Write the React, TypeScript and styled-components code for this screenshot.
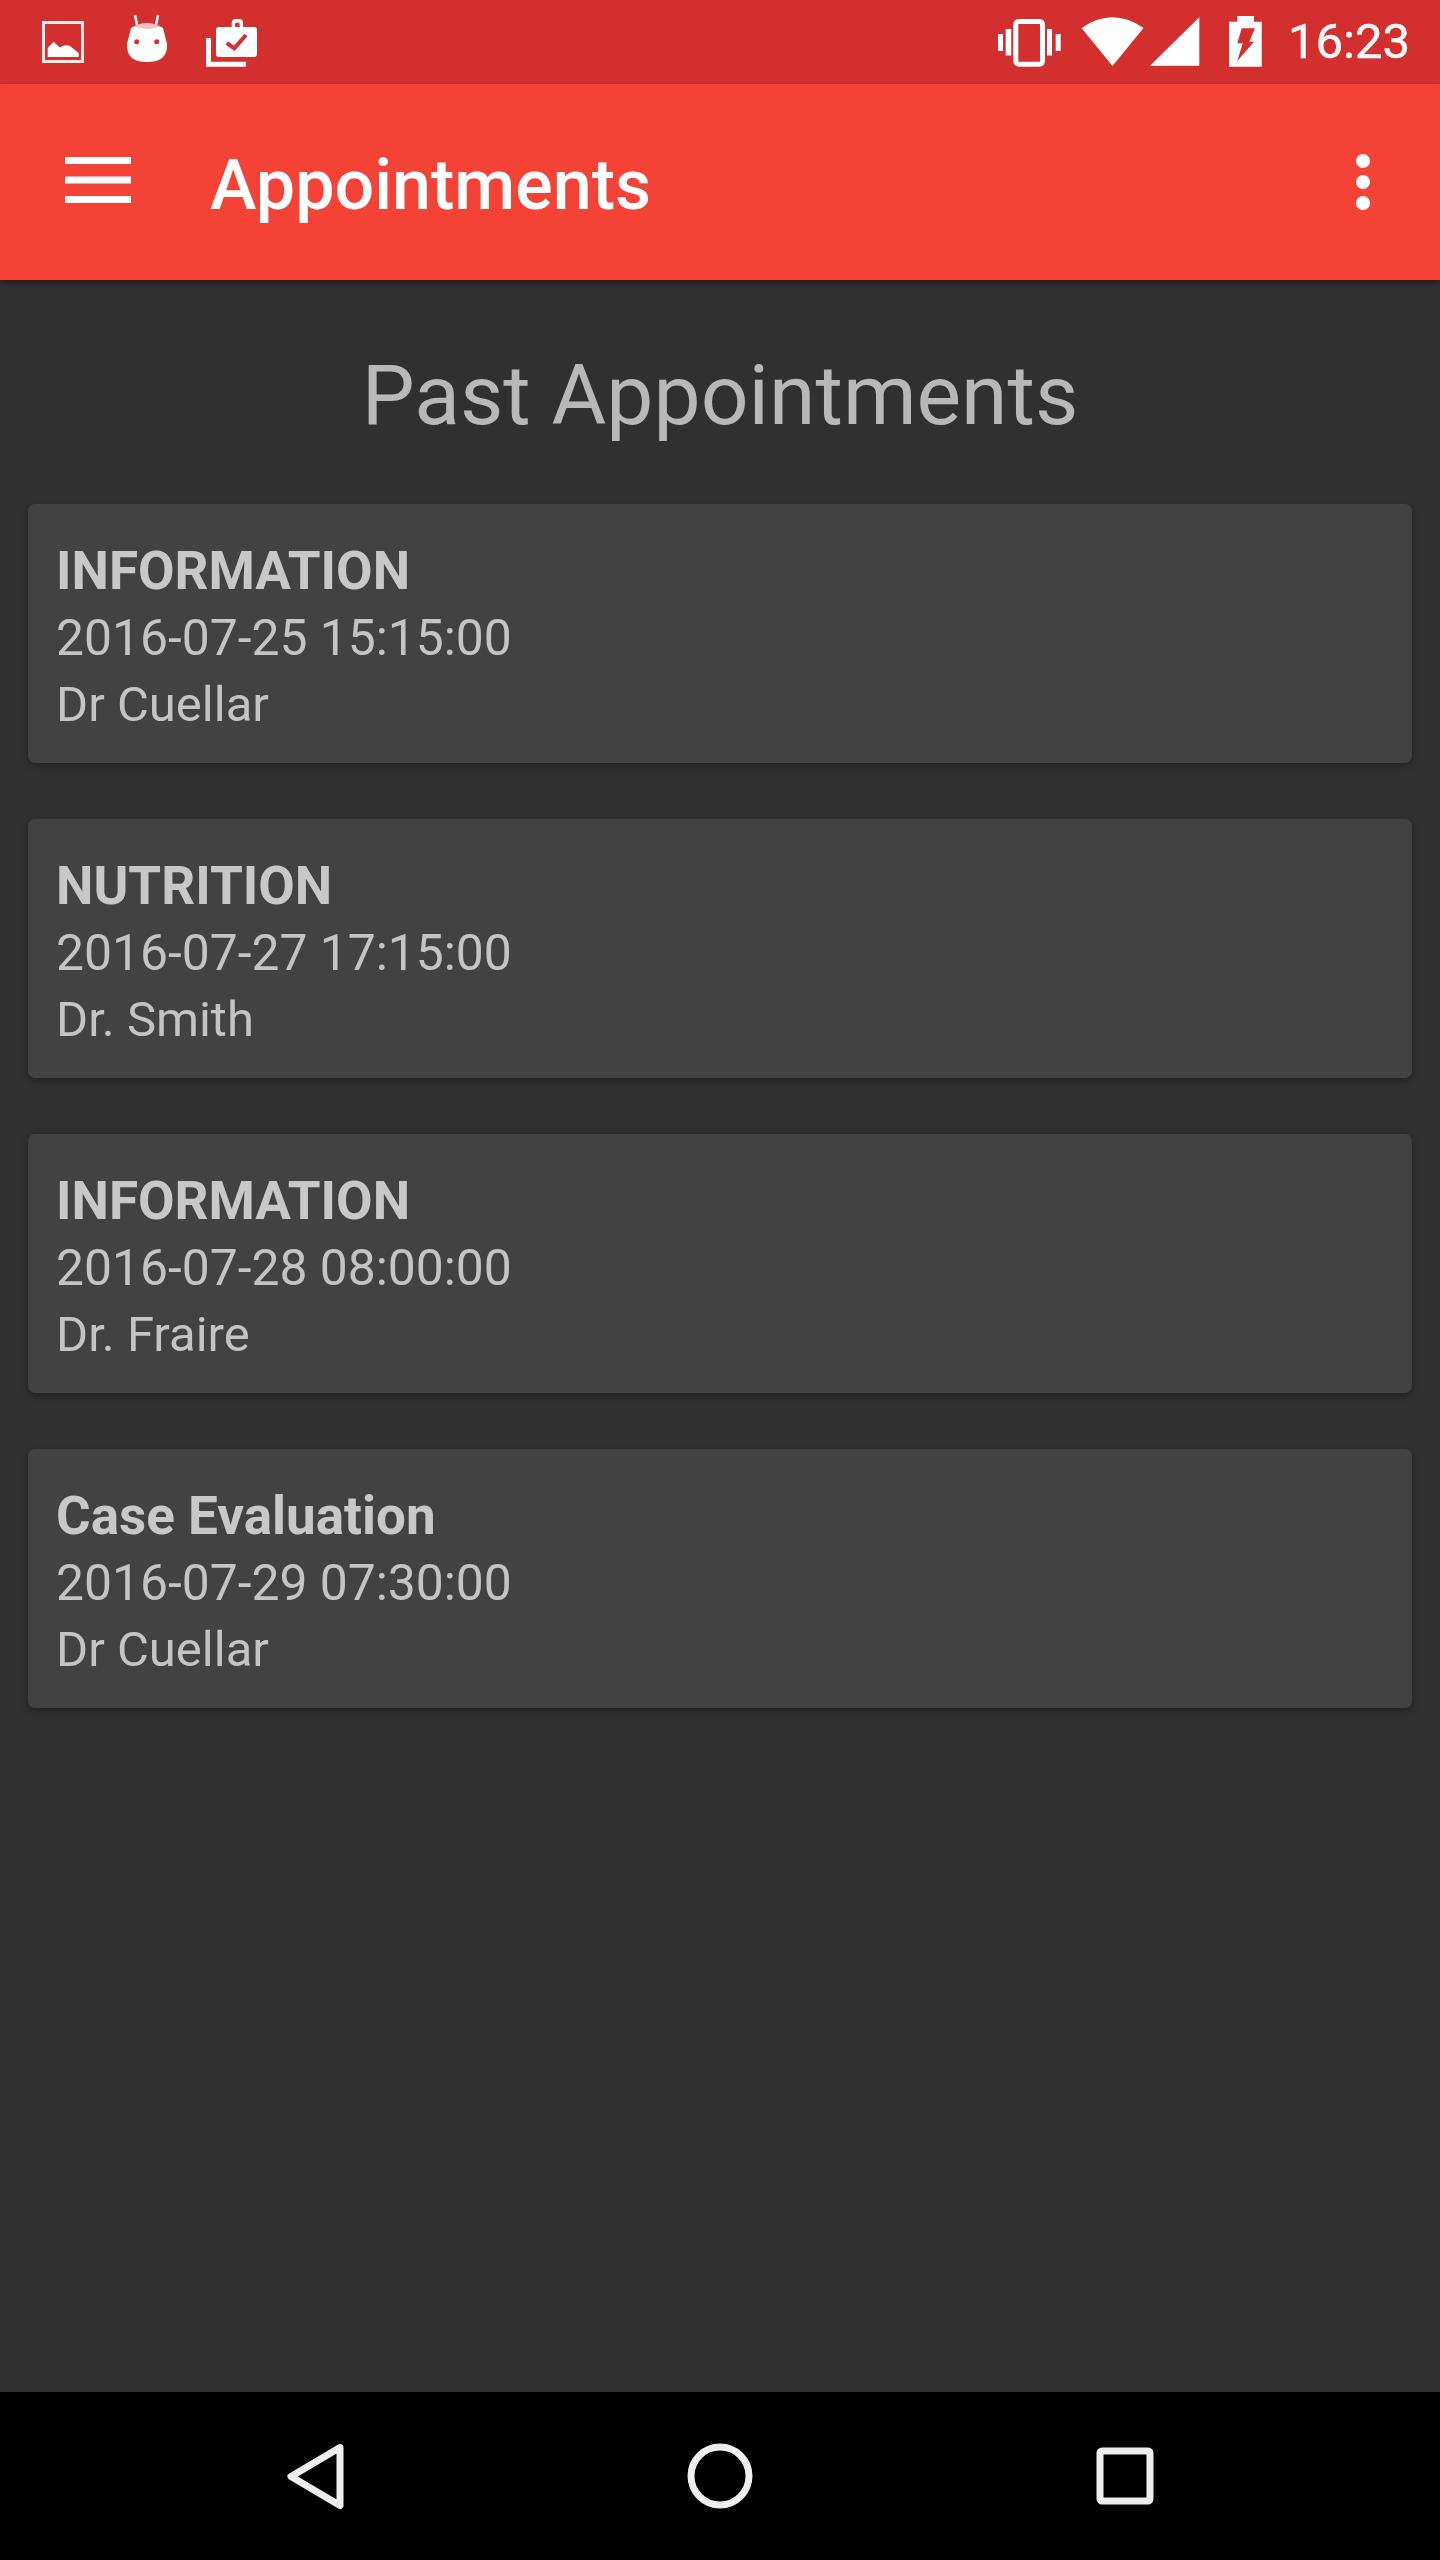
import React from "react"
import styled, { createGlobalStyle } from "styled-components"

const GlobalStyle = createGlobalStyle`
  html, body {
    margin: 0;
    padding: 0;
    background: #303030;
  }
  * {
    box-sizing: border-box;
  }
`

const Screen = styled.div`
  width: 1440px;
  height: 2560px;
  display: flex;
  flex-direction: column;
  overflow: hidden;
  background: #303030;
  font-family: Roboto, "Liberation Sans", sans-serif;
`

const StatusBar = styled.div`
  height: 84px;
  flex: none;
  display: flex;
  align-items: center;
  background: #d32f2f;
  color: #ffffff;
  padding-left: 42px;
  padding-right: 30px;
`

const StatusIcon = styled.svg<{ $gap?: number }>`
  display: block;
  flex: none;
  height: 84px;
  margin-left: ${({ $gap }) => $gap ?? 0}px;
`

const StatusSpacer = styled.div`
  flex: 1;
`

const Clock = styled.span`
  font-size: 49px;
  line-height: 84px;
  margin-left: 26px;
  color: #fafafa;
  -webkit-text-stroke: 0.5px #fafafa;
`

const AppBar = styled.header`
  height: 196px;
  flex: none;
  display: flex;
  align-items: center;
  background: #f44336;
  padding: 0 70px 0 65px;
  box-shadow: 0 3px 6px rgba(0, 0, 0, 0.35);
  position: relative;
`

const MenuIcon = styled.svg`
  display: block;
  flex: none;
  margin-bottom: 4px;
  fill: #ffffff;
`

const AppBarTitle = styled.h1`
  flex: 1;
  margin: 6px 0 0 79px;
  font-size: 70px;
  line-height: 82px;
  font-weight: 500;
  color: #ffffff;
`

const Content = styled.main`
  flex: 1;
  padding: 0 28px;
`

const Heading = styled.h2`
  margin: 0;
  padding-top: 67px;
  height: 224px;
  text-align: center;
  font-size: 84px;
  line-height: 98px;
  font-weight: 400;
  color: #b8b8b8;
`

const CardList = styled.div`
  display: flex;
  flex-direction: column;
  gap: 56px;
`

const Card = styled.section`
  height: 259px;
  padding: 33px 28px 0;
  background: #424242;
  border-radius: 7px;
  box-shadow: 0 3px 7px rgba(0, 0, 0, 0.3);
`

const CardTitle = styled.div`
  font-size: 53px;
  line-height: 68px;
  font-weight: 700;
  color: #c8c8c8;
`

const CardDate = styled.div`
  font-size: 49.8px;
  line-height: 66px;
  color: #c4c4c4;
`

const CardDoctor = styled.div`
  font-size: 49px;
  line-height: 67px;
  color: #c4c4c4;
`

const NavBar = styled.nav`
  height: 168px;
  flex: none;
  display: flex;
  align-items: center;
  justify-content: center;
  gap: 305px;
  background: #000000;
`

const NavIcon = styled.svg`
  display: block;
  width: 100px;
  height: 100px;
  fill: none;
  stroke: #eeeeee;
  stroke-width: 7;
  stroke-linejoin: round;
`

const appointments = [
  { title: "INFORMATION", date: "2016-07-25 15:15:00", doctor: "Dr Cuellar" },
  { title: "NUTRITION", date: "2016-07-27 17:15:00", doctor: "Dr. Smith" },
  { title: "INFORMATION", date: "2016-07-28 08:00:00", doctor: "Dr. Fraire" },
  { title: "Case Evaluation", date: "2016-07-29 07:30:00", doctor: "Dr Cuellar" },
]

const red = "#d32f2f"

export default function App() {
  return (
    <Screen>
      <GlobalStyle />
      <StatusBar>
        <StatusIcon width="42" viewBox="42 0 42 84">
          <rect x="43.5" y="22.5" width="39" height="39" fill="none" stroke="#fff" strokeOpacity="0.9" strokeWidth="3" />
          <path d="M47.7 57V48L53.5 41.7L60 47.5Q65 44 70 46L78.7 53V57Z" fill="#fff" />
        </StatusIcon>
        <StatusIcon width="46" $gap={40} viewBox="124 0 46 84">
          <path d="M135 15L137 25M158 15L156 25" stroke="#fff" strokeWidth="2.5" fill="none" />
          <path d="M131 28Q147 18 163 28L167 44Q168 62 147 62Q126 62 127 44Z" fill="#fff" />
          <path d="M133 26Q147 19 161 26Q147 32 133 26Z" fill={red} fillOpacity="0.3" />
          <circle cx="136.7" cy="41.7" r="2.5" fill={red} />
          <circle cx="156.7" cy="41.7" r="2.5" fill={red} />
        </StatusIcon>
        <StatusIcon width="52" $gap={36} viewBox="206 0 52 84">
          <path d="M231.7 27V23Q231.7 19 235.7 19H239Q243 19 243 23V27M235 27V24.5A2 2 0 0 1 237 22.5H237.7A2 2 0 0 1 239.7 24.5V27Z" fill="#fff" fillRule="evenodd" />
          <rect x="216" y="27" width="41" height="30" rx="3" fill="#fff" />
          <path d="M226.7 43L234.3 48.3L246 35" fill="none" stroke={red} strokeWidth="4" />
          <path d="M208.5 38V64.2H246" fill="none" stroke="#fff" strokeWidth="5" />
        </StatusIcon>
        <StatusSpacer />
        <StatusIcon width="63" viewBox="999 0 63 84">
          <rect x="1016.8" y="21.5" width="26.7" height="42.7" rx="3" fill="none" stroke="#fff" strokeWidth="5" />
          <path d="M999 34H1004V51H999ZM1006.7 29H1012.3V55.6H1006.7ZM1048 29H1053V55.6H1048ZM1056.7 34H1061.7V51H1056.7Z" fill="#fff" />
        </StatusIcon>
        <StatusIcon width="63" $gap={20} viewBox="1081.5 0 63 84">
          <path d="M1082 28Q1113 6.6 1144 28L1113 66Z" fill="#fff" />
        </StatusIcon>
        <StatusIcon width="50" $gap={5.5} viewBox="1150 0 50 84">
          <path d="M1150 65.7L1199.3 17.3V65.7Z" fill="#fff" />
        </StatusIcon>
        <StatusIcon width="33" $gap={29} viewBox="1229 0 33 84">
          <path d="M1237.3 16H1254V21.7H1261.7V66.7H1229V21.7H1237.3Z" fill="#fff" />
          <path d="M1241.7 28.3H1255L1249.3 41.7H1254L1237.3 61L1242.7 43.3H1237.3Z" fill={red} />
        </StatusIcon>
        <Clock>16:23</Clock>
      </StatusBar>
      <AppBar>
        <MenuIcon width="66" height="46" viewBox="0 0 66 46">
          <rect y="0" width="66" height="7" />
          <rect y="19.5" width="66" height="7" />
          <rect y="39" width="66" height="7" />
        </MenuIcon>
        <AppBarTitle>Appointments</AppBarTitle>
        <svg width="14" height="56" viewBox="0 0 14 56" fill="#fff">
          <circle cx="7" cy="7" r="7" />
          <circle cx="7" cy="28" r="7" />
          <circle cx="7" cy="49" r="7" />
        </svg>
      </AppBar>
      <Content>
        <Heading>Past Appointments</Heading>
        <CardList>
          {appointments.map((item, index) => (
            <Card key={index}>
              <CardTitle>{item.title}</CardTitle>
              <CardDate>{item.date}</CardDate>
              <CardDoctor>{item.doctor}</CardDoctor>
            </Card>
          ))}
        </CardList>
      </Content>
      <NavBar>
        <NavIcon viewBox="0 0 100 100">
          <path d="M75 21.500L26 50.500L75 79.500Z" />
        </NavIcon>
        <NavIcon viewBox="0 0 100 100">
          <circle cx="50" cy="50" r="29" />
        </NavIcon>
        <NavIcon viewBox="0 0 100 100">
          <rect x="25" y="25" width="50" height="50" rx="2" />
        </NavIcon>
      </NavBar>
    </Screen>
  )
}
